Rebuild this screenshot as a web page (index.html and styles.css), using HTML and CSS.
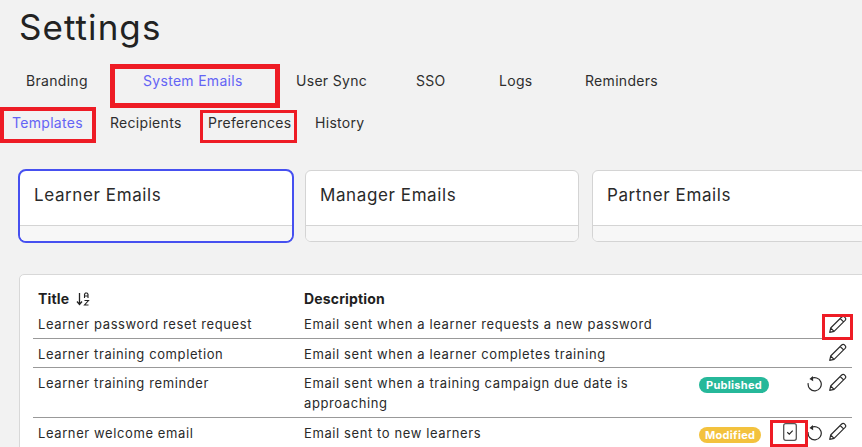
FILE: index.html
```html
<!DOCTYPE html>
<html lang="en">
<head>
<meta charset="utf-8">
<title>Settings</title>
<link rel="stylesheet" href="styles.css">
</head>
<body>
<svg class="defs" width="0" height="0" aria-hidden="true">
  <symbol id="pencil" viewBox="0 0 20 20"><path d="M1.8 18.3l1-4.6L14.4 2.1c.9-.9 2.2-.9 3 0l.6.6c.8.8.8 2 0 2.9L6.400 17.200z M12.800 3.700l3.600 3.600 M2.800 13.700l3.600 3.500" fill="none" stroke="#2b2b2b" stroke-width="1.200" stroke-linejoin="round"/></symbol>
  <symbol id="undo" viewBox="0 0 16 17"><path d="M4.200 3.600A7 7 0 1 1 1.300 8.200" fill="none" stroke="#2b2b2b" stroke-width="1.300"/><path d="M6.300 0.500L2.600 3.700l4 2.500z" fill="#2b2b2b"/></symbol>
</svg>
<main class="page">
  <h1 class="title">Settings</h1>
  <nav class="tabs">
    <a class="tab">Branding</a>
    <a class="tab active">System Emails</a>
    <a class="tab">User Sync</a>
    <a class="tab">SSO</a>
    <a class="tab">Logs</a>
    <a class="tab">Reminders</a>
  </nav>
  <nav class="subtabs">
    <a class="tab active">Templates</a>
    <a class="tab">Recipients</a>
    <a class="tab">Preferences</a>
    <a class="tab">History</a>
  </nav>
  <section class="cards">
    <div class="card selected"><div class="card-body">Learner Emails</div><div class="card-foot"></div></div>
    <div class="card"><div class="card-body">Manager Emails</div><div class="card-foot"></div></div>
    <div class="card"><div class="card-body">Partner Emails</div><div class="card-foot"></div></div>
  </section>
  <section class="panel">
    <div class="row head">
      <div class="c-title"><b>Title</b>
        <svg class="sort" width="14" height="14" viewBox="0 0 14 14"><path d="M3.500 1v11M1 9.500l2.500 3 2.500-3" fill="none" stroke="#222" stroke-width="1.300"/><path d="M8.500 6V2.300l1-1.300h1.500l1 1.300V6M8.500 4h4M8.500 8.500h4l-4 4.500h4" fill="none" stroke="#222" stroke-width="1.100"/></svg>
      </div>
      <div class="c-desc"><b>Description</b></div>
    </div>
    <div class="row r1">
      <div class="c-title">Learner password reset request</div>
      <div class="c-desc">Email sent when a learner requests a new password</div>
      <div class="c-badge"></div>
      <div class="c-icons"><svg class="ic-pencil"><use href="#pencil"/></svg></div>
    </div>
    <div class="row r2">
      <div class="c-title">Learner training completion</div>
      <div class="c-desc">Email sent when a learner completes training</div>
      <div class="c-badge"></div>
      <div class="c-icons"><svg class="ic-pencil"><use href="#pencil"/></svg></div>
    </div>
    <div class="row r3">
      <div class="c-title">Learner training reminder</div>
      <div class="c-desc">Email sent when a training campaign due date is approaching</div>
      <div class="c-badge"><span class="badge published">Published</span></div>
      <div class="c-icons"><svg class="ic-undo"><use href="#undo"/></svg><svg class="ic-pencil"><use href="#pencil"/></svg></div>
    </div>
    <div class="row r4">
      <div class="c-title">Learner welcome email</div>
      <div class="c-desc">Email sent to new learners</div>
      <div class="c-badge"><span class="badge modified">Modified</span></div>
      <div class="c-icons">
        <svg class="ic-clip" width="14" height="18" viewBox="0 0 14 18"><rect x="0.700" y="0.700" width="12.600" height="16.600" rx="2" fill="none" stroke="#555" stroke-width="1.300"/><path d="M4.300 9.300l2 1.800 3.400-3.400" fill="none" stroke="#222" stroke-width="1.200"/></svg>
        <svg class="ic-undo"><use href="#undo"/></svg><svg class="ic-pencil"><use href="#pencil"/></svg>
      </div>
    </div>
  </section>
</main>
<div class="mark m-system"></div>
<div class="mark m-templates"></div>
<div class="mark m-prefs"></div>
<div class="mark m-pencil"></div>
<div class="mark m-clip"></div>
</body>
</html>
```

FILE: styles.css
```css
* { box-sizing: border-box; }
html, body { margin: 0; height: 100%; overflow: hidden; }
body {
  background: #f2f2f2;
  color: #2a2a2a;
  font-family: Inter, "Liberation Sans", sans-serif;
  position: relative;
}
.defs { position: absolute; }
.page { width: 900px; height: 447px; overflow: hidden; }
.title {
  margin: 0;
  padding: 5px 0 0 19px;
  height: 60px;
  font-size: 35px;
  line-height: 44px;
  font-weight: 400;
  color: #222;
  letter-spacing: 1.05px;
}
.tabs, .subtabs { display: grid; font-size: 14px; line-height: 20px; letter-spacing: 0.3px; }
.tabs { padding: 11px 0 0 26px; height: 53px; grid-template-columns: 117px 153px 120px 83px 86px auto; }
.subtabs { padding: 0 0 0 12px; height: 56px; grid-template-columns: 98px 98px 107px auto; }
.tab { display: block; color: #2e2e2e; white-space: nowrap; }
.tab.active { color: #6464f5; }
.cards { display: flex; padding-left: 18px; gap: 11px; align-items: flex-start; }
.card {
  width: 274px;
  height: 72px;
  margin-top: 1px;
  background: #fff;
  border: 1px solid #d4d4d4;
  border-radius: 6px;
  display: flex;
  flex-direction: column;
  overflow: hidden;
}
.card + .card + .card { margin-left: 2px; }
.card.selected { width: 276px; height: 74px; margin-top: 0; border: 2px solid #4650f0; border-radius: 8px; }
.card-body { flex: 1; padding: 12px 14px 0; font-size: 17px; line-height: 24px; color: #2a2a2a; letter-spacing: 0.6px; }
.card-foot { height: 16px; flex: none; background: #f7f7f7; border-top: 1px solid #d4d4d4; }
.panel {
  margin: 31px 0 0 19px;
  width: 860px;
  height: 260px;
  background: #fff;
  border: 1px solid #d8d8d8;
  border-radius: 5px;
  padding: 14px 0 0 13px;
  font-size: 13px;
  line-height: 20px;
  letter-spacing: 0.6px;
}
.row { display: flex; width: 819px; border-bottom: 1px solid #999; }
.row.head { border-bottom: 0; height: 21px; font-size: 14px; letter-spacing: 0.15px; }
.row b { font-weight: 700; color: #1f1f1f; }
.c-title { width: 271px; padding-left: 5px; flex: none; }
.c-desc { width: 395px; flex: none; padding-right: 30px; }
.c-badge { width: 68px; flex: none; padding-top: 4px; }
.c-icons { flex: 1; display: flex; justify-content: flex-end; align-items: flex-start; gap: 6px; padding: 0 5px 0 0; }
.sort { vertical-align: -2px; margin-left: 3px; }
.r1 { height: 29px; padding-top: 4px; }
.r2 { height: 29px; padding-top: 5px; }
.r3 { height: 50px; padding-top: 5px; }
.r4 { border-bottom: 0; padding-top: 5px; }
.ic-pencil { width: 19px; height: 19px; flex: none; }
.r1 .ic-pencil { margin-top: 1px; }
.r2 .ic-pencil, .r4 .ic-pencil { margin-top: -1px; }
.ic-undo { width: 15px; height: 17px; flex: none; margin-top: 2px; }
.r4 .ic-undo { margin-top: 1px; }
.ic-clip { flex: none; margin-right: 4px; }
.badge {
  display: block;
  width: max-content;
  padding: 0 7px;
  border-radius: 8px;
  font-size: 11px;
  line-height: 16px;
  font-weight: 700;
  color: #fff;
  letter-spacing: 0.3px;
}
.published { background: #26b89a; }
.modified { background: #f3c23e; padding: 0 6px; }
.mark { position: absolute; border: 4px solid #ee1c25; }
.m-system { left: 110px; top: 64px; width: 170px; height: 44px; border-width: 5px; }
.m-templates { left: 0; top: 107px; width: 96px; height: 36px; }
.m-prefs { left: 200px; top: 110px; width: 97px; height: 33px; border-width: 3px; }
.m-pencil { left: 822px; top: 314px; width: 31px; height: 26px; border-width: 3px; }
.m-clip { left: 770px; top: 420px; width: 38px; height: 27px; border-width: 3px; }
```
